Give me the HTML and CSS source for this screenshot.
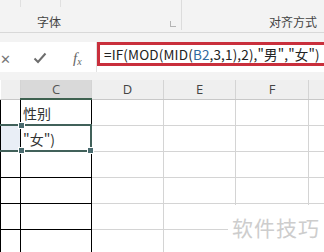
FILE: index.html
```html
<!DOCTYPE html>
<html lang="zh-CN">
<head>
    <meta charset="UTF-8">
    <title>公式</title>
    <link rel="stylesheet" href="styles.css">
</head>
<body>
    <div class="ribbon">
        <div class="grp grp-font">
            <span class="tick t1"></span><span class="tick t2"></span>
            <span class="label">字体</span>
            <span class="launch"></span>
        </div>
        <div class="grp grp-align">
            <span class="label">对齐方式</span>
        </div>
    </div>

    <div class="fbar">
        <div class="frow">
            <div class="fbtns">
                <span class="btn-x">✕</span>
                <svg class="btn-ok" width="14" height="12" viewBox="0 0 14 12">
                    <path d="M1.5 6.5 L5 10 L12.5 1.5" fill="none" stroke="#6d6d6d" stroke-width="2"/>
                </svg>
                <span class="btn-fx">f<sub>x</sub></span>
            </div>
            <div class="formula">=IF(MOD(MID(<span class="ref">B2</span>,3,1),2),"男","女")</div>
        </div>
    </div>

    <div class="sheet">
        <table class="grid">
            <colgroup>
                <col class="c-b"><col class="c-c"><col class="c-d"><col class="c-e"><col class="c-f"><col class="c-g">
            </colgroup>
            <tr class="head">
                <th></th><th class="on">C</th><th>D</th><th>E</th><th>F</th><th></th>
            </tr>
            <tr>
                <td class="blk"></td><td class="blk">性别</td><td></td><td></td><td></td><td></td>
            </tr>
            <tr>
                <td class="blk sel"></td><td class="blk">"女")</td><td></td><td></td><td></td><td></td>
            </tr>
            <tr>
                <td class="blk"></td><td class="blk"></td><td></td><td></td><td></td><td></td>
            </tr>
            <tr>
                <td class="blk"></td><td class="blk"></td><td></td><td></td><td></td><td></td>
            </tr>
            <tr>
                <td class="blk"></td><td class="blk"></td><td></td><td></td><td></td><td></td>
            </tr>
            <tr>
                <td class="blk"></td><td class="blk"></td><td></td><td></td><td></td><td></td>
            </tr>
        </table>

        <div class="selbox">
            <span class="hdl h1"></span>
            <span class="hdl h2"></span>
            <span class="hdl h3"></span>
        </div>

        <div class="mark">软件技巧</div>
    </div>
</body>
</html>
```

FILE: styles.css
```css
body {
    margin: 0;
    width: 324px;
    height: 252px;
    overflow: hidden;
    background-color: #ffffff;
    font-family: "Noto Sans CJK SC", "Noto Sans", sans-serif;
    color: #333333;
}

.ribbon {
    display: flex;
    height: 32px;
    background-color: #f3f3f3;
    border-bottom: 1px solid #d8d8d8;
}

.grp {
    position: relative;
    display: flex;
    align-items: flex-end;
    height: 30px;
    box-sizing: border-box;
}

.grp-font {
    width: 182px;
    border-right: 1px solid #dcdcdc;
    padding-left: 37px;
}

.grp-align {
    flex: 1;
    justify-content: flex-end;
    padding-right: 7px;
}

.label {
    font-size: 12px;
    line-height: 16px;
    color: #444444;
}

.tick {
    position: absolute;
    top: 0;
    width: 1px;
    height: 7px;
    background-color: #e0e0e0;
}

.t1 { left: 20px; }
.t2 { left: 60px; }

.launch {
    position: absolute;
    right: 5px;
    bottom: 3px;
    width: 5px;
    height: 5px;
    border-left: 1px solid #b4b4b4;
    border-bottom: 1px solid #b4b4b4;
}

.fbar {
    height: 47px;
    background-color: #f3f3f3;
    padding-top: 9px;
    box-sizing: border-box;
}

.frow {
    display: flex;
    height: 30px;
    background-color: #ffffff;
}

.fbtns {
    display: flex;
    align-items: center;
    width: 97px;
    height: 30px;
    padding-top: 2px;
    box-sizing: border-box;
    border-right: 1px solid #e2e2e2;
}

.btn-x {
    margin-left: 0;
    width: 12px;
    font-size: 13px;
    color: #777777;
}

.btn-ok {
    margin-left: 21px;
}

.btn-fx {
    margin-left: 26px;
    font-family: "Liberation Serif", serif;
    font-style: italic;
    font-size: 15px;
    color: #666666;
}

.btn-fx sub {
    font-size: 10px;
    vertical-align: -2px;
}

.formula {
    flex: 1;
    height: 24px;
    margin-right: -40px;
    border: 3px solid #c92f3c;
    box-sizing: border-box;
    padding-left: 4px;
    font-size: 13.5px;
    letter-spacing: 0.15px;
    line-height: 18px;
    color: #222222;
    white-space: nowrap;
    overflow: hidden;
}

.ref {
    color: #2f6aa0;
}

.sheet {
    position: relative;
    height: 172px;
    overflow: hidden;
}

.grid {
    border-collapse: collapse;
    table-layout: fixed;
    width: 324px;
}

.c-b { width: 20px; }
.c-c { width: 71px; }
.c-d { width: 72px; }
.c-e { width: 72px; }
.c-f { width: 73px; }
.c-g { width: 16px; }

.grid th {
    height: 18px;
    padding: 0;
    background-color: #efefef;
    border-right: 1px solid #d4d4d4;
    border-bottom: 1px solid #c8c8c8;
    font-family: "Open Sans", sans-serif;
    font-weight: normal;
    font-size: 13px;
    line-height: 17px;
    color: #444444;
}

.grid th.on {
    background-color: #d9d9d9;
    border-bottom: 2px solid #3e6150;
    color: #555555;
}

.grid td {
    height: 25px;
    padding: 0 0 0 2px;
    border: 1px solid #d4d4d4;
    font-size: 14px;
    color: #333333;
    white-space: nowrap;
    overflow: hidden;
}

.grid td.blk {
    border: 1px solid #000000;
}

.grid td.sel {
    background-color: #e9eef6;
}

.selbox {
    position: absolute;
    left: -3px;
    top: 44px;
    width: 95px;
    height: 28px;
    border: 2px solid #41615a;
    box-sizing: border-box;
}

.hdl {
    position: absolute;
    width: 5px;
    height: 5px;
    background-color: #4a6b6f;
    border: 1px solid #ffffff;
}

.h1 { left: 19px; top: -4px; }
.h2 { left: 19px; bottom: -4px; }
.h3 { right: -4px; bottom: -4px; }

.mark {
    position: absolute;
    left: 228px;
    top: 125px;
    width: 96px;
    height: 60px;
    padding: 7px 0 0 4px;
    box-sizing: border-box;
    background-color: #ffffff;
    font-size: 21px;
    letter-spacing: 1px;
    color: #cdcdcd;
}
```
